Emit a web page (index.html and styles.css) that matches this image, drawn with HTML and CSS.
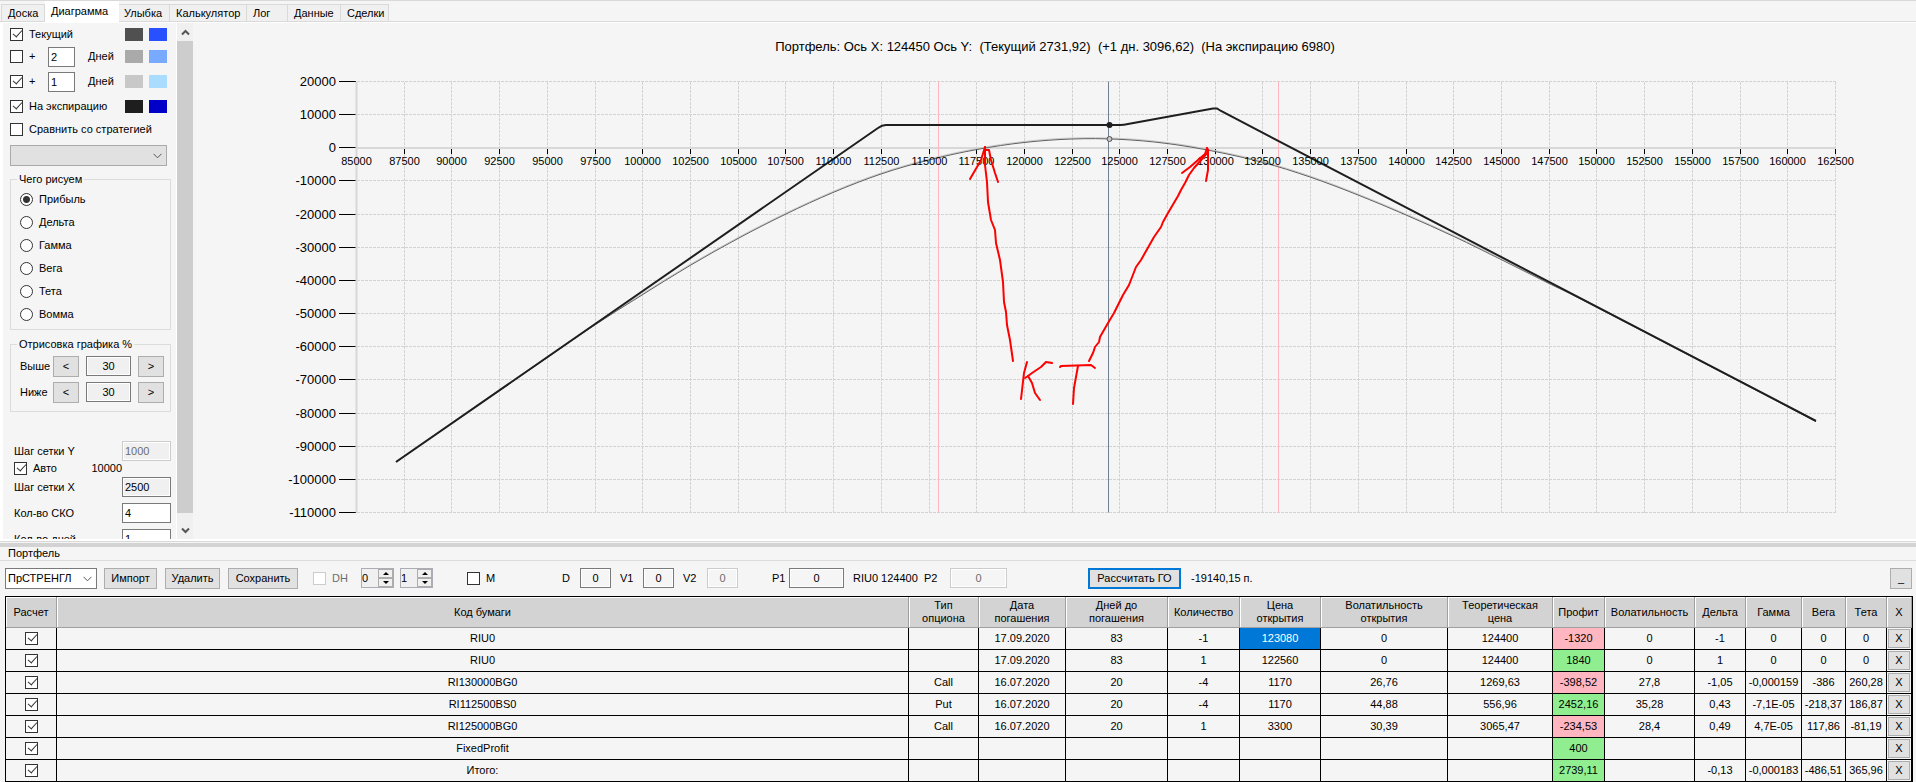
FILE: index.html
```
<!DOCTYPE html>
<html lang="ru">
<head>
    <meta charset="utf-8">
    <title>Портфель</title>
    <link rel="stylesheet" href="styles.css">
</head>
<body>

<nav class="tabs">
    <button type="button" class="tab tab-board">Доска</button>
    <button type="button" class="tab tab-chart active">Диаграмма</button>
    <button type="button" class="tab tab-smile">Улыбка</button>
    <button type="button" class="tab tab-calc">Калькулятор</button>
    <button type="button" class="tab tab-log">Лог</button>
    <button type="button" class="tab tab-data">Данные</button>
    <button type="button" class="tab tab-deals">Сделки</button>
</nav>

<main class="top">
    <aside class="sidebar">
        <div class="line line-first">
            <label class="check"><input type="checkbox" checked> Текущий</label>
            <span class="swatch c-cur"></span><span class="swatch c-cur2"></span>
        </div>
        <div class="line">
            <label class="check"><input type="checkbox"> +</label>
            <input type="text" class="days" value="2" id="days1">
            <label class="days-label" for="days1">Дней</label>
            <span class="swatch c-two"></span><span class="swatch c-two2"></span>
        </div>
        <div class="line line-tall">
            <label class="check"><input type="checkbox" checked> +</label>
            <input type="text" class="days" value="1" id="days2">
            <label class="days-label" for="days2">Дней</label>
            <span class="swatch c-one"></span><span class="swatch c-one2"></span>
        </div>
        <div class="line">
            <label class="check"><input type="checkbox" checked> На экспирацию</label>
            <span class="swatch c-exp"></span><span class="swatch c-exp2"></span>
        </div>
        <div class="line">
            <label class="check"><input type="checkbox"> Сравнить со стратегией</label>
        </div>
        <div class="combo combo-strategy">
            <select aria-label="Стратегия"><option></option></select>
            <svg width="9" height="6" viewBox="0 0 9 6"><path d="M.5 .8 4.5 4.8 8.5 .8"/></svg>
        </div>

        <fieldset class="box">
            <legend>Чего рисуем</legend>
            <label class="radio"><input type="radio" name="what" checked> Прибыль</label>
            <label class="radio"><input type="radio" name="what"> Дельта</label>
            <label class="radio"><input type="radio" name="what"> Гамма</label>
            <label class="radio"><input type="radio" name="what"> Вега</label>
            <label class="radio"><input type="radio" name="what"> Тета</label>
            <label class="radio"><input type="radio" name="what"> Вомма</label>
        </fieldset>

        <fieldset class="box box-range">
            <legend>Отрисовка графика %</legend>
            <div class="range">
                <label for="above">Выше</label>
                <button type="button" class="btn">&lt;</button>
                <input type="text" id="above" value="30" readonly>
                <button type="button" class="btn">&gt;</button>
            </div>
            <div class="range">
                <label for="below">Ниже</label>
                <button type="button" class="btn">&lt;</button>
                <input type="text" id="below" value="30" readonly>
                <button type="button" class="btn">&gt;</button>
            </div>
        </fieldset>

        <div class="steps">
            <div class="step step-y"><label for="stepY">Шаг сетки Y</label><input type="text" id="stepY" value="1000" disabled></div>
            <div class="step-auto">
                <label class="check"><input type="checkbox" checked> Авто</label>
                <span>10000</span>
            </div>
            <div class="step"><label for="stepX">Шаг сетки X</label><input type="text" id="stepX" value="2500" readonly></div>
            <div class="step"><label for="sko">Кол-во СКО</label><input type="text" id="sko" value="4"></div>
            <div class="step"><label for="dayCount">Кол-во дней</label><input type="text" id="dayCount" value="1"></div>
        </div>
    </aside>

    <div class="scrollbar">
        <svg width="9" height="7" viewBox="0 0 9 7"><path d="M1 5.5 4.5 2 8 5.5"/></svg>
        <div class="thumb"></div>
        <svg width="9" height="7" viewBox="0 0 9 7"><path d="M1 1.5 4.5 5 8 1.5"/></svg>
    </div>

    <div class="chart">
        <svg id="chart" viewBox="193 23 1723 516">
            <text class="title" x="1055" y="51" text-anchor="middle">Портфель: Ось X: 124450 Ось Y:  (Текущий 2731,92)  (+1 дн. 3096,62)  (На экспирацию 6980)</text>
            <g id="grid"></g>
            <g id="curves"></g>
            <g id="labels"></g>
            <g class="ink">
                <polyline points="985,147 985,165 987,182 988,202 991,220 995,230 996,243 1000,260 1003,282 1004,302 1006,312 1007,325 1010,340 1013,361"/>
                <polyline points="970,179 977,167 981,160 985,147 985,150 989,150 991,160 995,173 998,182"/>
                <polyline points="1207,148 1208,152 1202,159 1194,168 1189,175 1185,183 1181,190 1178,196 1168,213 1163,222 1161,227 1154,237 1141,260 1136,267 1129,285 1123,295 1114,313 1108,323 1100,337 1099,342 1095,347 1093,353 1089,361"/>
                <polyline points="1182,173 1190,167 1198,160 1205,154 1207,148 1208,150 1208,170 1206,181"/>
                <polyline points="1027,362 1024,373 1021,399"/>
                <polyline points="1052,363 1046,362 1041,367 1032,373 1028,376 1025,378"/>
                <polyline points="1028,376 1032,383 1035,393 1040,400"/>
                <polyline points="1060,367 1061,366 1091,365 1095,368"/>
                <polyline points="1078,366 1074,388 1073,404"/>
            </g>
        </svg>
    </div>
</main>

<div class="splitter"></div>

<fieldset class="portfolio">
    <legend>Портфель</legend>
    <div class="toolbar">
        <div class="combo combo-portfolio">
            <select aria-label="Портфель"><option>ПрСТРЕНГЛ</option></select>
            <svg width="9" height="6" viewBox="0 0 9 6"><path d="M.5 .8 4.5 4.8 8.5 .8"/></svg>
        </div>
        <button type="button" class="btn btn-import">Импорт</button>
        <button type="button" class="btn btn-delete">Удалить</button>
        <button type="button" class="btn btn-save">Сохранить</button>
        <label class="check off"><input type="checkbox" disabled> DH</label>
        <div class="spin">
            <input type="text" value="0" aria-label="DH 1">
            <div><button type="button" aria-label="Больше"></button><button type="button" class="down" aria-label="Меньше"></button></div>
        </div>
        <div class="spin">
            <input type="text" value="1" aria-label="DH 2">
            <div><button type="button" aria-label="Больше"></button><button type="button" class="down" aria-label="Меньше"></button></div>
        </div>
        <label class="check"><input type="checkbox"> M</label>
        <div class="field"><label for="fD">D</label><input type="text" id="fD" value="0"></div>
        <div class="field"><label for="fV1">V1</label><input type="text" id="fV1" value="0"></div>
        <div class="field"><label for="fV2">V2</label><input type="text" id="fV2" value="0" disabled></div>
        <div class="field field-p1"><label for="fP1">P1</label><input type="text" id="fP1" value="0"></div>
        <span>RIU0 124400</span>
        <div class="field field-p2"><label for="fP2">P2</label><input type="text" id="fP2" value="0" disabled></div>
        <button type="button" class="btn btn-go">Рассчитать ГО</button>
        <span>-19140,15 п.</span>
        <button type="button" class="btn btn-min">_</button>
    </div>
</fieldset>

<table class="positions">
    <colgroup>
        <col class="w-calc"><col><col class="w-type"><col class="w-date"><col class="w-days"><col class="w-qty">
        <col class="w-price"><col class="w-volopen"><col class="w-theo"><col class="w-profit"><col class="w-vol">
        <col class="w-delta"><col class="w-gamma"><col class="w-vega"><col class="w-theta"><col class="w-x">
    </colgroup>
    <thead>
        <tr>
            <th>Расчет</th><th>Код бумаги</th><th>Тип<br>опциона</th><th>Дата<br>погашения</th><th>Дней до<br>погашения</th>
            <th>Количество</th><th>Цена<br>открытия</th><th>Волатильность<br>открытия</th><th>Теоретическая<br>цена</th>
            <th>Профит</th><th>Волатильность</th><th>Дельта</th><th>Гамма</th><th>Вега</th><th>Тета</th><th>X</th>
        </tr>
    </thead>
    <tbody id="rows"></tbody>
</table>

<script src="script.js"></script>
</body>
</html>
```

FILE: styles.css
```
* {
    box-sizing: border-box;
}

body {
    margin: 0;
    height: 100vh;
    display: flex;
    flex-direction: column;
    background: #f5f5f5;
    color: #000;
    font: 11px/13px "Liberation Sans", Arial, sans-serif;
    overflow: hidden;
}

button, input, select {
    font: inherit;
    color: inherit;
    margin: 0;
    padding: 0;
    border-radius: 0;
}

/* Tabs */
.tabs {
    display: flex;
    align-items: flex-end;
    height: 23px;
    padding-left: 1px;
    border-top: 1px solid #d9d9d9;
    border-bottom: 1px solid #fff;
    box-shadow: inset 0 -1px #d9d9d9;
}

.tab {
    height: 18px;
    border: 1px solid #d9d9d9;
    border-left: none;
    background: #f0f0f0;
    text-align: left;
    padding-left: 6px;
    white-space: nowrap;
}

.tab.active {
    height: 21px;
    background: #fff;
    border-color: #fff;
    padding-bottom: 1px;
}

.tab-board { width: 44px; border-left: 1px solid #d9d9d9; }
.tab-chart { width: 74px; }
.tab-smile { width: 51px; padding-left: 5px; }
.tab-calc { width: 77px; }
.tab-log { width: 41px; }
.tab-data { width: 53px; }
.tab-deals { width: 48px; }

.top {
    flex: 1;
    min-height: 0;
    display: flex;
}

/* Left panel */
.sidebar {
    width: 177px;
    padding: 0 6px 0 7px;
    border-left: 3px solid #fff;
    border-right: 1px solid #fff;
    overflow: hidden;
}

.line {
    display: flex;
    align-items: center;
    height: 23px;
    width: 157px;
}

.line-first {
    height: 22px;
}

.line-tall {
    height: 27px;
}

.check, .radio {
    display: flex;
    align-items: center;
    gap: 6px;
    white-space: nowrap;
}

.line .check {
    flex: 1;
}

.line .days {
    width: 27px;
    height: 20px;
    padding-left: 2px;
}

.days-label {
    width: 50px;
    padding-left: 13px;
}

.line .check:has(+ .days) {
    flex: none;
    width: 38px;
}

input[type="checkbox"] {
    appearance: none;
    position: relative;
    flex: none;
    width: 13px;
    height: 13px;
    border: 1px solid #333;
    background: #fff;
}

input[type="checkbox"]:checked::after {
    content: "";
    position: absolute;
    left: 2px;
    top: 1px;
    width: 8px;
    height: 4px;
    border: solid #333;
    border-width: 0 0 1px 1px;
    transform: rotate(-48deg);
}

input[type="checkbox"]:disabled {
    border-color: #ccc;
}

input[type="radio"] {
    appearance: none;
    flex: none;
    width: 13px;
    height: 13px;
    border: 1px solid #333;
    border-radius: 50%;
    background: #fff;
}

input[type="radio"]:checked {
    background: radial-gradient(circle, #333 3px, #fff 4px);
}

input[type="text"] {
    border: 1px solid #7a7a7a;
    background: #fff;
}

input[type="text"]:read-only {
    background: #f0f0f0;
    box-shadow: inset 0 0 0 1px #fff;
}

input[type="text"]:disabled {
    border-color: #ccc;
    color: #6d6d6d;
}

.swatch {
    width: 18px;
    height: 13px;
    margin-right: 6px;
}

.swatch:last-child {
    margin-right: 0;
}

.c-cur { background: #505050; }
.c-cur2 { background: #2850ff; }
.c-two { background: #aaa; }
.c-two2 { background: #78aaff; }
.c-one { background: #c8c8c8; }
.c-one2 { background: #aadcff; }
.c-exp { background: #1e1e1e; }
.c-exp2 { background: #0000c8; }

.combo {
    position: relative;
    height: 21px;
}

.combo select {
    appearance: none;
    width: 100%;
    height: 100%;
    padding-left: 2px;
    border: 1px solid #7a7a7a;
    background: #fff;
}

.combo svg {
    position: absolute;
    right: 5px;
    top: 8px;
    pointer-events: none;
}

svg path {
    fill: none;
    stroke: #555;
}

.combo-strategy {
    width: 157px;
    margin: 4px 0 6px;
}

.combo-strategy select {
    border-color: #aaa;
    background: #e1e1e1;
}

fieldset {
    min-width: 0;
    margin: 0;
}

.box {
    width: 161px;
    padding: 2px 6px 3px 9px;
    border: 1px solid #dcdcdc;
    margin-bottom: 7px;
}

.box legend {
    margin-left: -3px;
    padding: 0 2px;
    line-height: 14px;
}

.radio {
    height: 23px;
}

.box-range {
    padding-bottom: 6px;
    margin-bottom: 28px;
}

.range {
    display: grid;
    grid-template-columns: 26px 26px 45px 26px;
    column-gap: 7px;
    align-items: center;
    height: 26px;
}

.range input {
    height: 20px;
    text-align: center;
}

.btn {
    height: 21px;
    border: 1px solid #adadad;
    background: #e1e1e1;
    white-space: nowrap;
}

.steps {
    width: 161px;
    padding-left: 4px;
}

.step {
    display: flex;
    justify-content: space-between;
    align-items: center;
    height: 26px;
}

.step-y {
    height: 22px;
}

.step input {
    width: 49px;
    height: 20px;
    padding-left: 2px;
}

.step-auto {
    display: flex;
    justify-content: space-between;
    height: 12px;
    padding-right: 49px;
}

.scrollbar {
    display: flex;
    flex-direction: column;
    align-items: center;
    width: 16px;
    padding: 6px 0 5px;
    gap: 5px;
    background: #f0f0f0;
}

.scrollbar svg path {
    stroke-width: 2;
}

.thumb {
    flex: 1;
    align-self: stretch;
    margin-bottom: 9px;
    background: #cdcdcd;
}

/* Chart */
.chart {
    flex: 1;
    min-width: 0;
}

.chart svg {
    display: block;
    width: 100%;
    height: 100%;
}

.title {
    font-size: 13px;
    white-space: pre;
}

.grid-line {
    stroke: #d3d3d3;
    stroke-dasharray: 3 1;
    shape-rendering: crispEdges;
}

.axis {
    stroke: #d8d8d8;
    stroke-width: 2;
}

.tick {
    stroke: #000;
    shape-rendering: crispEdges;
}

.sigma {
    stroke: #ffb6c1;
}

.cursor {
    stroke: #708090;
}

.y-label {
    font-size: 13px;
    text-anchor: end;
}

.x-label {
    font-size: 11px;
    text-anchor: middle;
}

.chart .curve {
    fill: none;
    stroke: #606060;
}

.chart .curve-next {
    fill: none;
    stroke: #c8c8c8;
}

.chart .curve-exp {
    fill: none;
    stroke: #1e1e1e;
    stroke-width: 2;
}

.ink polyline {
    fill: none;
    stroke: #f00;
    stroke-width: 2;
    stroke-linecap: round;
    stroke-linejoin: round;
}

.splitter {
    height: 8px;
    background: linear-gradient(#fff 2px, #d9d9d9 2px 3px, #f5f5f5 3px 4px, #d3d3d3 4px);
    cursor: row-resize;
}

/* Portfolio */
.portfolio {
    padding: 0;
    border: none;
    background: linear-gradient(#dcdcdc, #dcdcdc) 0 6px / 100% 1px no-repeat;
}

.portfolio legend {
    margin-left: 6px;
    padding: 0 2px;
    background: #f5f5f5;
}

.toolbar {
    display: grid;
    grid-template-columns: 99px 61px 63px 85px 48px 39px 67px 95px 58px 63px 64px 106px 71px 92px 175px 1fr 22px;
    align-items: center;
    height: 36px;
    padding: 0 4px 0 5px;
}

.combo-portfolio {
    width: 92px;
}

.btn-import { width: 53px; }
.btn-delete { width: 55px; }
.btn-save { width: 70px; }

.off {
    color: #6d6d6d;
}

.spin {
    display: flex;
    width: 33px;
    height: 20px;
    border: 1px solid #abadb3;
    background: #f0f0f0;
}

.spin input[type="text"] {
    width: 16px;
    border: none;
    background: none;
}

.spin div {
    display: flex;
    flex-direction: column;
    flex: 1;
}

.spin button {
    display: flex;
    align-items: center;
    justify-content: center;
    height: 9px;
    border: 1px solid #adadad;
    background: #f0f0f0;
}

.spin button::after {
    content: "";
    border: 3px solid transparent;
    border-top: none;
    border-bottom: 3px solid #000;
}

.spin .down::after {
    border-bottom: none;
    border-top: 3px solid #000;
}

.field {
    display: flex;
    justify-content: space-between;
    align-items: center;
    padding-right: 9px;
}

.field input[type="text"] {
    width: 31px;
    height: 20px;
    text-align: center;
    background: #f5f5f5;
    box-shadow: inset 0 0 0 1px #fff;
}

.field-p1 {
    padding-left: 25px;
}

.field-p1 input[type="text"] {
    width: 55px;
}

.field-p2 input[type="text"] {
    width: 57px;
}

.btn-go {
    width: 93px;
    margin-left: 72px;
    border: 2px solid #0078d7;
}

.positions {
    width: calc(100% - 8px);
    margin: 0 3px 0 5px;
    table-layout: fixed;
    border-collapse: separate;
    border-spacing: 0;
    border: solid #000;
    border-width: 1px 1px 0 1px;
    text-align: center;
}

.positions th {
    height: 31px;
    padding: 0;
    font-weight: normal;
    background: #d3d3d3;
    border-right: 1px solid #a0a0a0;
    border-bottom: 1px solid #a0a0a0;
    box-shadow: inset 1px 1px #fff;
    white-space: nowrap;
}

.positions td {
    height: 22px;
    padding: 0;
    border-right: 1px solid #000;
    border-bottom: 1px solid #000;
    white-space: nowrap;
}

.positions td input {
    display: block;
    margin: 0 auto;
}

.positions td .btn {
    display: block;
    width: 22px;
    height: 19px;
    margin: 0 auto;
}

.positions .selected {
    background: #0078d7;
    color: #fff;
}

.positions .loss {
    background: #ffb6c1;
}

.positions .gain {
    background: #90ee90;
}

.w-calc { width: 51px; }
.w-type { width: 70px; }
.w-date { width: 87px; }
.w-days { width: 102px; }
.w-qty { width: 72px; }
.w-price { width: 81px; }
.w-volopen { width: 127px; }
.w-theo { width: 105px; }
.w-profit { width: 52px; }
.w-vol { width: 90px; }
.w-delta { width: 51px; }
.w-gamma { width: 56px; }
.w-vega { width: 44px; }
.w-theta { width: 41px; }
.w-x { width: 25px; }
```

FILE: script.js
```
// code, type, date, days, qty, price, vol open, theo, profit, vol, delta, gamma, vega, theta
var rows = [
    ["RIU0", "", "17.09.2020", "83", "-1", "123080", "0", "124400", "-1320", "0", "-1", "0", "0", "0"],
    ["RIU0", "", "17.09.2020", "83", "1", "122560", "0", "124400", "1840", "0", "1", "0", "0", "0"],
    ["RI130000BG0", "Call", "16.07.2020", "20", "-4", "1170", "26,76", "1269,63", "-398,52", "27,8", "-1,05", "-0,000159", "-386", "260,28"],
    ["RI112500BS0", "Put", "16.07.2020", "20", "-4", "1170", "44,88", "556,96", "2452,16", "35,28", "0,43", "-7,1E-05", "-218,37", "186,87"],
    ["RI125000BG0", "Call", "16.07.2020", "20", "1", "3300", "30,39", "3065,47", "-234,53", "28,4", "0,49", "4,7E-05", "117,86", "-81,19"],
    ["FixedProfit", "", "", "", "", "", "", "", "400", "", "", "", "", ""],
    ["Итого:", "", "", "", "", "", "", "", "2739,11", "", "-0,13", "-0,000183", "-486,51", "365,96"]
];

var html = "";
rows.forEach(function (row, r) {
    html += '<tr><td><input type="checkbox" aria-label="Расчет" checked></td>';
    row.forEach(function (value, c) {
        var cls = "";
        if (c === 8) cls = value[0] === "-" ? "loss" : "gain";
        if (r === 0 && c === 5) cls = "selected";
        html += '<td class="' + cls + '">' + value + "</td>";
    });
    html += '<td><button type="button" class="btn">X</button></td></tr>';
});
document.getElementById("rows").innerHTML = html;

// Chart
var LEFT = 356.5, RIGHT = 1835.5, TOP = 81.5, BOTTOM = 512.5;

function px(price) {
    return Math.floor(LEFT + (price - 85000) / 77500 * (RIGHT - LEFT)) + 0.5;
}

function py(profit) {
    return Math.floor(TOP + (20000 - profit) / 130000 * (BOTTOM - TOP)) + 0.5;
}

function line(cls, x1, y1, x2, y2) {
    return '<line class="' + cls + '" x1="' + x1 + '" y1="' + y1 + '" x2="' + x2 + '" y2="' + y2 + '"/>';
}

// smooth path through the points
function spline(pts, dy) {
    var d = "M" + pts[0][0] + " " + (pts[0][1] + dy);
    for (var i = 0; i < pts.length - 1; i++) {
        var a = pts[i - 1] || pts[i], b = pts[i], c = pts[i + 1], e = pts[i + 2] || c;
        d += "C" + [b[0] + (c[0] - a[0]) / 6, b[1] + (c[1] - a[1]) / 6 + dy,
            c[0] - (e[0] - b[0]) / 6, c[1] - (e[1] - b[1]) / 6 + dy, c[0], c[1] + dy].join(" ");
    }
    return d;
}

var grid = "", labels = "", v, p;
for (v = 20000; v >= -110000; v -= 10000) {
    p = py(v);
    grid += line("grid-line", LEFT, p, RIGHT, p) + line("tick", 339, p, 356, p);
    labels += '<text class="y-label" x="336" y="' + (p + 4.5) + '">' + v + "</text>";
}
for (v = 85000; v <= 162500; v += 2500) {
    p = px(v);
    grid += line("grid-line", p, TOP, p, BOTTOM) + line("tick", p, 149, p, 154);
    labels += '<text class="x-label" x="' + p + '" y="165">' + v + "</text>";
}
grid += line("axis", LEFT, TOP, LEFT, BOTTOM) + line("axis", LEFT, 148, RIGHT, 148);

var current = [[396, 462], [480, 404], [546, 358.5], [594, 325.5], [642, 295], [690, 265.5], [738, 238.5],
    [786, 214], [833, 192.5], [881, 174], [929, 160], [977, 149.5], [1024, 142.5], [1072, 139], [1119, 139.3],
    [1167, 143.5], [1215, 151.5], [1263, 162.5], [1310, 177], [1358, 195], [1406, 215], [1455, 237],
    [1501, 259.5], [1549, 283.5], [1597, 307.5], [1816, 421.5]];

document.getElementById("grid").innerHTML = grid;
document.getElementById("labels").innerHTML = labels;
document.getElementById("curves").innerHTML =
    line("sigma", 938.5, TOP, 938.5, BOTTOM) + line("sigma", 1278.5, TOP, 1278.5, BOTTOM) +
    line("cursor", 1108.5, TOP, 1108.5, BOTTOM) +
    '<path class="curve-next" d="' + spline(current, -1) + '"/>' +
    '<path class="curve" d="' + spline(current, 0) + '"/>' +
    '<path class="curve-exp" d="M396 462L878 128Q882 125 886 125L1120 125Q1124 125 1128 124L1213 108.5L1217 108.5L1221 111L1816 421"/>' +
    '<circle cx="1109.5" cy="125" r="3" fill="#1e1e1e"/>' +
    '<circle cx="1109.5" cy="139" r="2.5" fill="#c8c8c8" stroke="#505050"/>';
```
